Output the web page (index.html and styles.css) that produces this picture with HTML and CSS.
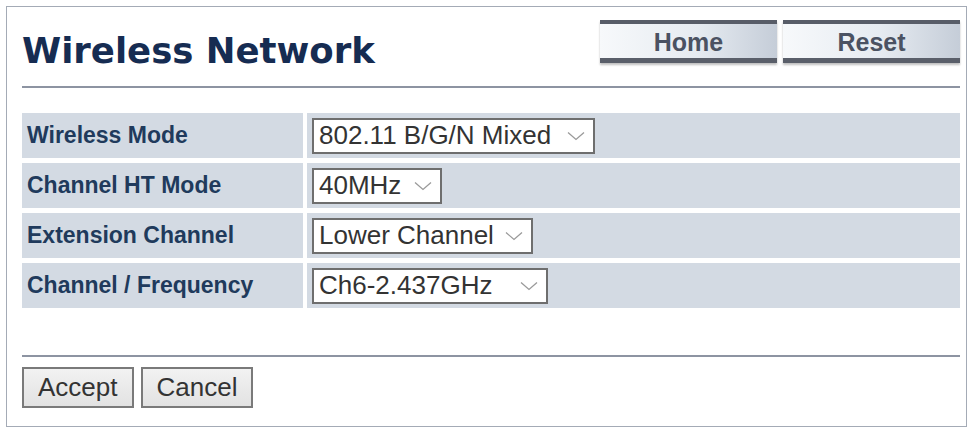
FILE: index.html
```html
<!DOCTYPE html>
<html>
<head>
  <title>Wireless Network</title>
  <link rel="stylesheet" href="styles.css">
</head>
<body>
  <div class="panel">
    <div class="header">
      <h1 class="title">Wireless Network</h1>
      <div class="nav">
        <button class="nav-btn">Home</button>
        <button class="nav-btn">Reset</button>
      </div>
    </div>

    <form id="wireless-form">
      <div class="settings">
        <div class="label">Wireless Mode</div>
        <div class="value">
          <div class="select w-mode"><span>802.11 B/G/N Mixed</span>
            <svg class="chevron" width="18" height="10" viewBox="0 0 18 10"><polyline points="1,1.5 9,8.5 17,1.5" /></svg>
          </div>
        </div>

        <div class="label">Channel HT Mode</div>
        <div class="value">
          <div class="select w-ht"><span>40MHz</span>
            <svg class="chevron" width="18" height="10" viewBox="0 0 18 10"><polyline points="1,1.5 9,8.5 17,1.5" /></svg>
          </div>
        </div>

        <div class="label">Extension Channel</div>
        <div class="value">
          <div class="select w-ext"><span>Lower Channel</span>
            <svg class="chevron" width="18" height="10" viewBox="0 0 18 10"><polyline points="1,1.5 9,8.5 17,1.5" /></svg>
          </div>
        </div>

        <div class="label">Channel / Frequency</div>
        <div class="value">
          <div class="select w-freq"><span>Ch6-2.437GHz</span>
            <svg class="chevron" width="18" height="10" viewBox="0 0 18 10"><polyline points="1,1.5 9,8.5 17,1.5" /></svg>
          </div>
        </div>
      </div>

      <div class="actions">
        <input type="submit" class="btn" value="Accept">
        <input type="button" class="btn" value="Cancel">
      </div>
    </form>
  </div>
</body>
</html>
```

FILE: styles.css
```css
body {
  margin: 0;
  background-color: #ffffff;
  font-family: "Liberation Sans", Arial, sans-serif;
}

.panel {
  margin: 6px;
  width: 938px;
  height: 419px;
  padding: 0 6px 0 15px;
  border: 1px solid #a4abb6;
}

/* title row with the two nav buttons */
.header {
  display: flex;
  justify-content: space-between;
  align-items: flex-start;
  height: 79px;
  border-bottom: 2px solid #8d94a2;
}

.title {
  margin: 26px 0 0 0;
  font-family: "DejaVu Sans", Verdana, sans-serif;
  font-size: 35.5px;
  line-height: 36px;
  font-weight: bold;
  color: #162c52;
}

.nav {
  display: flex;
  gap: 6px;
  margin-top: 13px;
}

.nav-btn {
  width: 177px;
  height: 43px;
  padding: 3px 0 0 0;
  border: none;
  border-top: 4px solid #585d68;
  border-bottom: 5px solid #5a5f6a;
  background: linear-gradient(to right, #f7f9fb 0%, #e6ebf1 55%, #c5cdd8 100%);
  box-shadow: 0 2px 2px rgba(0, 0, 0, 0.25);
  font-family: "Liberation Sans", Arial, sans-serif;
  font-size: 25px;
  font-weight: bold;
  color: #4b5262;
  cursor: pointer;
}

/* settings grid */
.settings {
  display: grid;
  grid-template-columns: 281px 1fr;
  grid-auto-rows: 45px;
  gap: 5px 4px;
  margin-top: 25px;
}

.label,
.value {
  display: flex;
  align-items: center;
  background-color: #d3dae3;
}

.label {
  padding-left: 5px;
  font-size: 23px;
  font-weight: bold;
  color: #203a5c;
}

.value {
  padding-left: 5px;
}

.select {
  display: flex;
  align-items: center;
  justify-content: space-between;
  box-sizing: border-box;
  height: 36px;
  padding: 0 8px 0 5px;
  border: 2px solid #6e6e6e;
  background-color: #ffffff;
  font-size: 26px;
  color: #333333;
}

.chevron polyline {
  fill: none;
  stroke: #9a9a9a;
  stroke-width: 1.3;
}

.w-mode { width: 283px; }
.w-ht { width: 130px; }
.w-ext { width: 221px; }
.w-freq { width: 236px; }

/* bottom buttons */
.actions {
  display: flex;
  gap: 7px;
  margin-top: 47px;
  padding-top: 10px;
  border-top: 2px solid #8d94a2;
}

.btn {
  height: 41px;
  padding: 0 14px;
  border: 2px solid #7a7a7a;
  background: linear-gradient(#f2f2f2, #e2e2e2);
  font-family: "Liberation Sans", Arial, sans-serif;
  font-size: 26px;
  color: #333333;
  cursor: pointer;
}
```
